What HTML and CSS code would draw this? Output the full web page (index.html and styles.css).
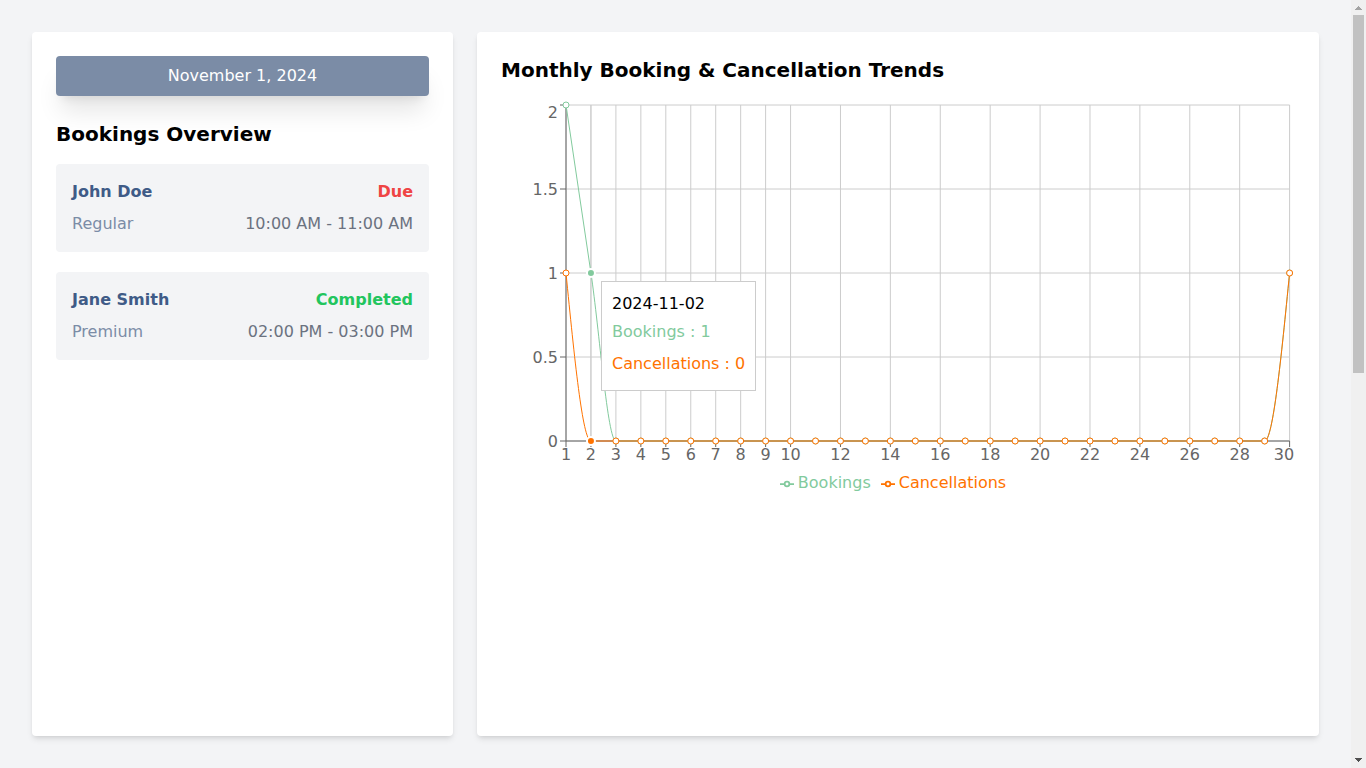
FILE: index.html
```html
<!DOCTYPE html>
<html lang="en">
<head>
<meta charset="utf-8">
<meta name="viewport" content="width=device-width, initial-scale=1">
<title>Bookings</title>
<link rel="stylesheet" href="styles.css">
</head>
<body>
<main class="dashboard">
  <section class="panel">
    <button type="button" class="date-button">November 1, 2024</button>
    <h2 class="panel-title">Bookings Overview</h2>
    <ul class="bookings">
      <li class="booking">
        <div class="booking-row booking-head"><span class="name">John Doe</span><span class="due">Due</span></div>
        <div class="booking-row"><span class="kind">Regular</span><span class="time">10:00 AM - 11:00 AM</span></div>
      </li>
      <li class="booking">
        <div class="booking-row booking-head"><span class="name">Jane Smith</span><span class="completed">Completed</span></div>
        <div class="booking-row"><span class="kind">Premium</span><span class="time">02:00 PM - 03:00 PM</span></div>
      </li>
    </ul>
  </section>
  <section class="panel">
    <h2 class="panel-title">Monthly Booking &amp; Cancellation Trends</h2>
    <div class="chart">
      <svg class="plot" id="plot" role="img" aria-label="Bookings and cancellations per day"></svg>
      <div class="tooltip">
        <p class="tooltip-label">2024-11-02</p>
        <ul class="tooltip-list">
          <li class="tooltip-item bookings-color">Bookings : 1</li>
          <li class="tooltip-item cancellations-color">Cancellations : 0</li>
        </ul>
      </div>
      <ul class="legend">
        <li class="legend-item bookings-color">
          <svg class="legend-icon" viewBox="0 0 32 32" aria-hidden="true"><path d="M0,16h10.667A5.333,5.333,0,1,1,21.333,16H32M21.333,16A5.333,5.333,0,1,1,10.667,16"/></svg>Bookings
        </li>
        <li class="legend-item cancellations-color">
          <svg class="legend-icon" viewBox="0 0 32 32" aria-hidden="true"><path d="M0,16h10.667A5.333,5.333,0,1,1,21.333,16H32M21.333,16A5.333,5.333,0,1,1,10.667,16"/></svg>Cancellations
        </li>
      </ul>
    </div>
  </section>
</main>
<div class="scrollbar" aria-hidden="true">
  <svg class="arrow arrow-up" viewBox="0 0 15 15"><path d="M7 6h1v1h1v1h1v1h1v1H4V9h1V8h1V7h1z"/></svg>
  <div class="track"><div class="thumb"></div></div>
  <svg class="arrow" viewBox="0 0 15 15"><path d="M4 5h7v1h-1v1H9v1H8v1H7V8H6V7H5V6H4z"/></svg>
</div>
<script src="chart.js"></script>
</body>
</html>
```
FILE: styles.css
```css
*, *::before, *::after { box-sizing: border-box; }
body {
  margin: 0;
  display: flex;
  height: 100vh;
  overflow: hidden;
  background: #f3f4f6;
  color: #000;
  font: 16px/24px "DejaVu Sans", sans-serif;
}
h2, p, ul { margin: 0; padding: 0; }
ul { list-style: none; }

.dashboard {
  flex: 1;
  min-width: 0;
  display: grid;
  grid-template-columns: minmax(0, 1fr) minmax(0, 2fr);
  gap: 24px;
  padding: 32px;
}
.panel {
  padding: 24px;
  background: #fff;
  border-radius: 4px;
  box-shadow: 0 4px 6px -1px rgba(0, 0, 0, .1), 0 2px 4px -2px rgba(0, 0, 0, .1);
}
.panel-title {
  margin-bottom: 16px;
  font-size: 20px;
  line-height: 28px;
  font-weight: 600;
}
.date-button {
  display: block;
  width: 100%;
  margin-bottom: 24px;
  padding: 8px 16px;
  border: 0;
  border-radius: 4px;
  background: #7b8ca6;
  color: #fff;
  font: inherit;
  text-align: center;
  box-shadow: 0 20px 25px -5px rgba(0, 0, 0, .1), 0 8px 10px -6px rgba(0, 0, 0, .1);
}
.bookings { display: grid; gap: 20px; }
.booking {
  padding: 16px;
  background: #f3f4f6;
  border-radius: 4px;
}
.booking-row { display: flex; justify-content: space-between; }
.booking-head { margin-bottom: 8px; font-weight: 600; }
.name { color: #3f5b87; }
.due { color: #ef4444; }
.completed { color: #22c55e; }
.kind { color: #7b8ca6; }
.time { color: #6b7280; }

.chart { position: relative; height: 400px; }
.plot { display: block; width: 100%; height: 371px; }
.grid-line { stroke: #ccc; }
.axis-line { stroke: #666; }
.tick-text { fill: #666; font-size: 16px; }
.x-text { text-anchor: middle; }
.y-text { text-anchor: end; }
.series { fill: none; stroke: currentColor; }
.dot { fill: #fff; stroke: currentColor; }
.active-dot { fill: currentColor; stroke: #fff; stroke-width: 2; }
.bookings-color { color: #82ca9d; }
.cancellations-color { color: #ff7300; }

.tooltip {
  position: absolute;
  left: 100px;
  top: 181px;
  padding: 10px;
  background: #fff;
  border: 1px solid #ccc;
  white-space: nowrap;
}
.tooltip-item { padding: 4px 0; }
.legend { display: flex; justify-content: center; }
.legend-item { margin-right: 10px; }
.legend-icon {
  display: inline-block;
  width: 14px;
  height: 14px;
  margin-right: 4px;
  vertical-align: middle;
  fill: none;
  stroke: currentColor;
  stroke-width: 4;
}

.scrollbar {
  flex: none;
  width: 15px;
  display: flex;
  flex-direction: column;
  background: #f0f0f0;
}
.arrow { display: block; width: 15px; height: 15px; fill: #505050; shape-rendering: crispEdges; }
.arrow-up { fill: #a3a3a3; }
.track { flex: 1; padding: 0 2px; }
.thumb { height: 358px; background: #c1c1c1; }
```
FILE: chart.js
```javascript
const svg = document.getElementById('plot');
const days = 30;
const bookings = Array(days).fill(0);
const cancellations = Array(days).fill(0);
bookings[0] = 2;
bookings[1] = 1;
bookings[29] = 1;
cancellations[0] = 1;
cancellations[29] = 1;
const activeIndex = 1;
const left = 65, top_ = 5, bottom = 341;

function add(name, attrs, text) {
  const el = document.createElementNS('http://www.w3.org/2000/svg', name);
  for (const key in attrs) el.setAttribute(key, attrs[key]);
  if (text !== undefined) el.textContent = text;
  svg.appendChild(el);
}

// Cubic path with monotone tangents.
function monotone(points) {
  const n = points.length;
  const h = points[1][0] - points[0][0];
  const s = [];
  for (let i = 0; i < n - 1; i++) s.push((points[i + 1][1] - points[i][1]) / h);
  const t = [];
  for (let i = 1; i < n - 1; i++) {
    const a = s[i - 1], b = s[i];
    t[i] = a * b <= 0 ? 0 : Math.sign(a) * Math.min(Math.abs(a), Math.abs(b));
  }
  t[0] = (3 * s[0] - t[1]) / 2;
  t[n - 1] = (3 * s[n - 2] - t[n - 2]) / 2;
  let d = `M${points[0]}`;
  for (let i = 0; i < n - 1; i++) {
    const [x0, y0] = points[i], [x1, y1] = points[i + 1];
    d += `C${x0 + h / 3},${y0 + t[i] * h / 3},${x1 - h / 3},${y1 - t[i + 1] * h / 3},${x1},${y1}`;
  }
  return d;
}

function draw() {
  svg.replaceChildren();
  const width = svg.getBoundingClientRect().width;
  const right = width - 5.4;
  const x = i => left + i * (right - left) / (days - 1);
  const y = v => bottom - v * (bottom - top_) / 2;
  const line = (cls, x1, y1, x2, y2) => add('line', { class: cls, x1, y1, x2, y2 });
  const labelled = [...Array(days).keys()].filter(i => i < 10 || i % 2 === 1);
  const values = [0, 0.5, 1, 1.5, 2];

  values.forEach(v => line('grid-line', left, y(v), right, y(v)));
  labelled.forEach(i => line('grid-line', x(i), top_, x(i), bottom));
  line('axis-line', left, bottom, right, bottom);
  line('axis-line', left, top_, left, bottom);
  labelled.forEach(i => {
    line('axis-line', x(i), bottom, x(i), bottom + 6);
    const tx = Math.min(x(i), width - 11);
    add('text', { class: 'tick-text x-text', x: tx, y: bottom + 19 }, i + 1);
  });
  values.forEach(v => {
    line('axis-line', left - 6, y(v), left, y(v));
    add('text', { class: 'tick-text y-text', x: left - 8, y: Math.max(y(v) + 6, 18) }, v);
  });
  line('grid-line', x(activeIndex), top_, x(activeIndex), bottom);

  const all = [[bookings, 'bookings-color'], [cancellations, 'cancellations-color']];
  all.forEach(([data, color]) => {
    const points = data.map((v, i) => [x(i), y(v)]);
    add('path', { class: `series ${color}`, d: monotone(points) });
    points.forEach(([cx, cy]) => add('circle', { class: `dot ${color}`, cx, cy, r: 3 }));
  });
  all.forEach(([data, color]) => {
    add('circle', { class: `active-dot ${color}`, cx: x(activeIndex), cy: y(data[activeIndex]), r: 4 });
  });
}

draw();
window.addEventListener('resize', draw);
```
